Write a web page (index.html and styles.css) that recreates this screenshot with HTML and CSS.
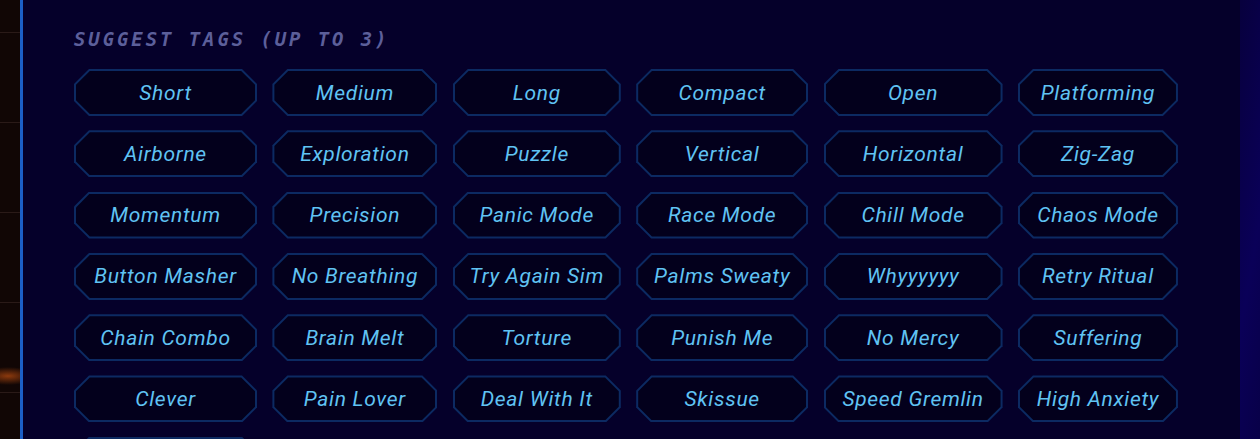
FILE: index.html
```html
<!DOCTYPE html>
<html lang="en">
<head>
    <title>Suggest Tags</title>
    <link rel="stylesheet" href="styles.css">
</head>
<body>
    <!-- Left backdrop strip -->
    <div class="side-strip"></div>

    <!-- Tag panel -->
    <section class="panel">
        <h2 class="panel-title">Suggest Tags (up to 3)</h2>
        <div class="tag-grid">
            <button class="tag"><span>Short</span></button>
            <button class="tag"><span>Medium</span></button>
            <button class="tag"><span>Long</span></button>
            <button class="tag"><span>Compact</span></button>
            <button class="tag"><span>Open</span></button>
            <button class="tag"><span>Platforming</span></button>

            <button class="tag"><span>Airborne</span></button>
            <button class="tag"><span>Exploration</span></button>
            <button class="tag"><span>Puzzle</span></button>
            <button class="tag"><span>Vertical</span></button>
            <button class="tag"><span>Horizontal</span></button>
            <button class="tag"><span>Zig-Zag</span></button>

            <button class="tag"><span>Momentum</span></button>
            <button class="tag"><span>Precision</span></button>
            <button class="tag"><span>Panic Mode</span></button>
            <button class="tag"><span>Race Mode</span></button>
            <button class="tag"><span>Chill Mode</span></button>
            <button class="tag"><span>Chaos Mode</span></button>

            <button class="tag"><span>Button Masher</span></button>
            <button class="tag"><span>No Breathing</span></button>
            <button class="tag"><span>Try Again Sim</span></button>
            <button class="tag"><span>Palms Sweaty</span></button>
            <button class="tag"><span>Whyyyyyy</span></button>
            <button class="tag"><span>Retry Ritual</span></button>

            <button class="tag"><span>Chain Combo</span></button>
            <button class="tag"><span>Brain Melt</span></button>
            <button class="tag"><span>Torture</span></button>
            <button class="tag"><span>Punish Me</span></button>
            <button class="tag"><span>No Mercy</span></button>
            <button class="tag"><span>Suffering</span></button>

            <button class="tag"><span>Clever</span></button>
            <button class="tag"><span>Pain Lover</span></button>
            <button class="tag"><span>Deal With It</span></button>
            <button class="tag"><span>Skissue</span></button>
            <button class="tag"><span>Speed Gremlin</span></button>
            <button class="tag"><span>High Anxiety</span></button>

            <!-- next row, scrolled below the fold -->
            <button class="tag" aria-label="More tags"></button>
        </div>
    </section>

    <!-- Right backdrop strip -->
    <div class="edge-strip"></div>
</body>
</html>
```

FILE: styles.css
```css
/* Global Styles */
* {
    margin: 0;
    padding: 0;
    box-sizing: border-box;
}

body {
    display: flex;
    height: 439px;
    overflow: hidden;
    background-color: #05002a;
    font-family: Roboto, "Liberation Sans", sans-serif;
}

/* Backdrop strips */
.side-strip {
    width: 20px;
    flex-shrink: 0;
    background:
        radial-gradient(ellipse 28px 9px at 8px 376px, rgba(170, 70, 15, 0.8), transparent),
        repeating-linear-gradient(to bottom, transparent 0, transparent 32px, #2a1a18 32px, #2a1a18 33px, transparent 33px, transparent 90px),
        #110605;
}

.edge-strip {
    flex: 1;
    background: linear-gradient(100deg, #07003d, #0a0058 60%, #080048);
}

/* Panel */
.panel {
    width: 1220px;
    flex-shrink: 0;
    border-left: 3px solid #1c5fc6;
    background-color: #05002a;
    padding: 27px 0 0 51px;
}

.panel-title {
    font-family: "DejaVu Sans Mono", "Liberation Mono", monospace;
    font-style: italic;
    font-weight: bold;
    font-size: 19px;
    line-height: 24px;
    letter-spacing: 2.9px;
    text-transform: uppercase;
    color: #5c5f9a;
    margin-bottom: 18px;
}

/* Tag grid */
.tag-grid {
    display: grid;
    grid-template-columns: 183px 165px 168px 172px 179px 160px;
    grid-auto-rows: 47px;
    column-gap: 15.4px;
    row-gap: 14.3px;
}

.tag {
    position: relative;
    display: flex;
    align-items: center;
    justify-content: center;
    border: none;
    background-color: #0c2a62;
    clip-path: polygon(15px 0, calc(100% - 15px) 0, 100% 15px, 100% calc(100% - 15px), calc(100% - 15px) 100%, 15px 100%, 0 calc(100% - 15px), 0 15px);
    font-family: inherit;
    font-style: italic;
    font-weight: 400;
    font-size: 21px;
    letter-spacing: 0.7px;
    color: #60c3f3;
    cursor: pointer;
}

.tag::before {
    content: "";
    position: absolute;
    inset: 2px;
    background-color: #03001c;
    clip-path: polygon(13.8px 0, calc(100% - 13.8px) 0, 100% 13.8px, 100% calc(100% - 13.8px), calc(100% - 13.8px) 100%, 13.8px 100%, 0 calc(100% - 13.8px), 0 13.8px);
}

.tag span {
    position: relative;
}

.tag:hover::before {
    background-color: #071040;
}
```
